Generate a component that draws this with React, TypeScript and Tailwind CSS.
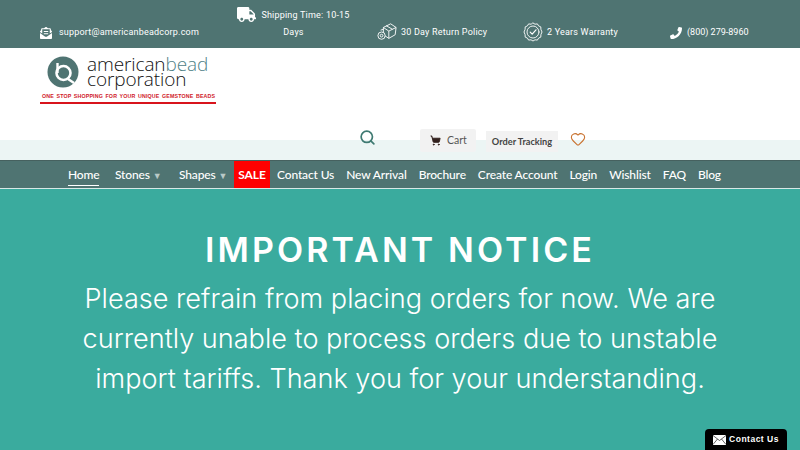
import { Search, Heart, ShoppingCart } from 'lucide-react';
import { FaTruck, FaEnvelopeOpenText, FaPhoneAlt } from 'react-icons/fa';

function BoxIcon() {
  return (
    <svg width="20" height="20" viewBox="0 0 22 20" fill="none" stroke="white" strokeWidth="1" strokeLinejoin="round">
      <path d="M7 5 15 1l6 4-1 8-7 4-6-4z" />
      <path d="M7 5l6 4 8-4M13 9v8M10 3l7 4M4 8l3-1" />
      <circle cx="5" cy="14" r="4" fill="#4f7472" />
      <circle cx="5" cy="14" r="1.5" />
    </svg>
  );
}

function BadgeIcon() {
  return (
    <svg width="20" height="20" viewBox="0 0 20 20" fill="none" stroke="white" strokeWidth="0.9" strokeLinecap="round" strokeLinejoin="round">
      <path d="M10 1l2 1.2 2.4-.3 1.2 2 2.2 1 .1 2.4L19 10l-1.1 2.7-.1 2.4-2.2 1-1.2 2-2.4-.3L10 19l-2-1.2-2.4.3-1.2-2-2.2-1-.1-2.4L1 10l1.1-2.7.1-2.4 2.2-1 1.2-2 2.4.3z" />
      <circle cx="10" cy="10" r="6" />
      <path d="M7.2 10.2l2 2 3.8-4.4" strokeWidth="1.2" />
    </svg>
  );
}

function LogoMark() {
  return (
    <svg width="32" height="32" viewBox="0 0 32 32">
      <circle cx="16" cy="16" r="15.5" fill="#4f7472" />
      <circle cx="16.5" cy="17" r="7" fill="none" stroke="white" strokeWidth="2.6" />
      <path d="M10.5 7v10" stroke="white" strokeWidth="2.4" />
      <path d="M21 23l6 4" stroke="white" strokeWidth="2.4" />
    </svg>
  );
}

function MailIcon() {
  return (
    <svg width="13" height="10" viewBox="0 0 13 10" fill="white" stroke="black" strokeWidth="0.6">
      <rect x="0" y="0" width="13" height="10" rx="0.5" stroke="none" />
      <path d="M0 0.5 6.5 5.5 13 0.5M0 9.5 4.5 4M13 9.5 8.5 4" fill="none" />
    </svg>
  );
}

export default function App() {
  const navLinks = ['Contact Us', 'New Arrival', 'Brochure', 'Create Account', 'Login', 'Wishlist', 'FAQ', 'Blog'];

  return (
    <div className="h-[450px] w-[800px] overflow-hidden relative bg-[#3aab9e] font-['Roboto',sans-serif]">
      {/* top info bar */}
      <div className="h-12 bg-[#4f7472] text-white text-[9px] leading-[17px] tracking-[0.2px] flex items-start pl-10">
        <div className="flex items-center gap-[7px] w-[191px] mt-[24px] h-[17px]">
          <FaEnvelopeOpenText size={12} />
          <span className="whitespace-nowrap">support@americanbeadcorp.com</span>
        </div>
        <div className="w-[125px] mt-[7px] flex flex-col items-center">
          <span className="flex items-center gap-[5px] whitespace-nowrap">
            <FaTruck size={19} className="-mt-[3px]" />
            Shipping Time: 10-15
          </span>
          <span>Days</span>
        </div>
        <div className="flex items-center gap-[4px] ml-[21px] w-[146px] mt-[22px]">
          <BoxIcon />
          <span className="whitespace-nowrap">30 Day Return Policy</span>
        </div>
        <div className="flex items-center gap-[4px] mt-[22px] w-[147px]">
          <BadgeIcon />
          <span className="whitespace-nowrap">2 Years Warranty</span>
        </div>
        <div className="flex items-center gap-[5px] mt-[24px] h-[17px]">
          <FaPhoneAlt size={12} className="-scale-x-100" />
          <span className="whitespace-nowrap tracking-normal">(800) 279-8960</span>
        </div>
      </div>

      {/* logo + actions */}
      <div className="h-28 bg-[linear-gradient(#ffffff_92px,#ecf5f4_92px)] pl-10 relative">
        <div className="w-[176px] pt-[8px]">
          <div className="flex items-center gap-[8px] pl-[7px]">
            <LogoMark />
            <div className="font-['Open_Sans',sans-serif] font-light text-[19px] leading-[15px] tracking-[-0.1px] text-[#111]">
              <div>american<span className="text-[#4f8187]">bead</span></div>
              <div>corporation</div>
            </div>
          </div>
          <div className="mt-[4px] text-[5.3px] leading-[9px] font-bold text-[#d0202a] tracking-[0.15px] [word-spacing:0.9px] whitespace-nowrap pl-[2px] border-b-2 border-[#d8141c] pb-[1px] font-['Liberation_Sans',sans-serif]">
            ONE STOP SHOPPING FOR YOUR UNIQUE GEMSTONE BEADS
          </div>
        </div>
        <div className="absolute left-[359px] top-[80px] flex items-start">
          <Search size={17} strokeWidth={2.4} className="text-[#3f7a72] mt-[1px]" />
          <div className="ml-[44px] mt-[1px] w-14 h-[23px] rounded-[2px] bg-[#f2f2f2] flex items-center gap-[6px] pl-2.5 text-[10.5px] text-[#555] font-['Lato',sans-serif]">
            <ShoppingCart size={11} fill="#33211e" className="text-[#33211e]" />
            <span>Cart</span>
          </div>
          <div className="ml-[10px] w-[72px] h-[21px] mt-[3px] bg-[#f2f2f2] flex items-center justify-center text-[9.2px] font-bold text-[#444] font-['Lato',sans-serif]">
            Order Tracking
          </div>
          <Heart size={16} strokeWidth={1.6} className="text-[#c8702c] ml-[12px] mt-[3px]" />
        </div>
      </div>

      {/* nav */}
      <nav className="h-[29px] bg-[#4f7472] border-t border-[#46615f] border-b border-b-[#d8e8e6] flex items-center pl-[68px] text-white text-[12px] tracking-[-0.14px] font-medium font-['Lato',sans-serif]">
        <a className="border-b border-white w-[31px] h-[19px] mt-[3px] leading-[16px] mr-[16px]">Home</a>
        <a className="w-[64px] whitespace-nowrap">Stones <span className="text-[9px] text-[#b9c9c7]">▼</span></a>
        <a className="w-[55px] whitespace-nowrap">Shapes <span className="text-[9px] text-[#b9c9c7]">▼</span></a>
        <a className="bg-[#fe0000] font-bold h-[27px] w-[36px] text-center leading-[27px] mr-[7px]">SALE</a>
        <div className="flex gap-[12px]">
          {navLinks.map((label) => (
            <a key={label} className="whitespace-nowrap">{label}</a>
          ))}
        </div>
      </nav>

      {/* notice */}
      <main className="text-white text-center pt-[38px]">
        <h1 className="font-['Inter',sans-serif] font-semibold text-[34px] leading-[46px] tracking-[3.1px]">IMPORTANT NOTICE</h1>
        <p className="mt-[6px] font-['Inter',sans-serif] font-light text-[27.1px] leading-[40px] w-[680px] mx-auto">
          Please refrain from placing orders for now. We are currently unable to process orders due to unstable import tariffs. Thank you for your understanding.
        </p>
      </main>

      <button type="button" className="absolute right-[13px] bottom-0 w-[82px] h-[21px] rounded-t-[4px] bg-black text-white text-[8.5px] font-bold tracking-[0.5px] flex items-center justify-center gap-[3px] whitespace-nowrap font-['Liberation_Sans',sans-serif]">
        <MailIcon />
        Contact Us
      </button>
    </div>
  );
}
